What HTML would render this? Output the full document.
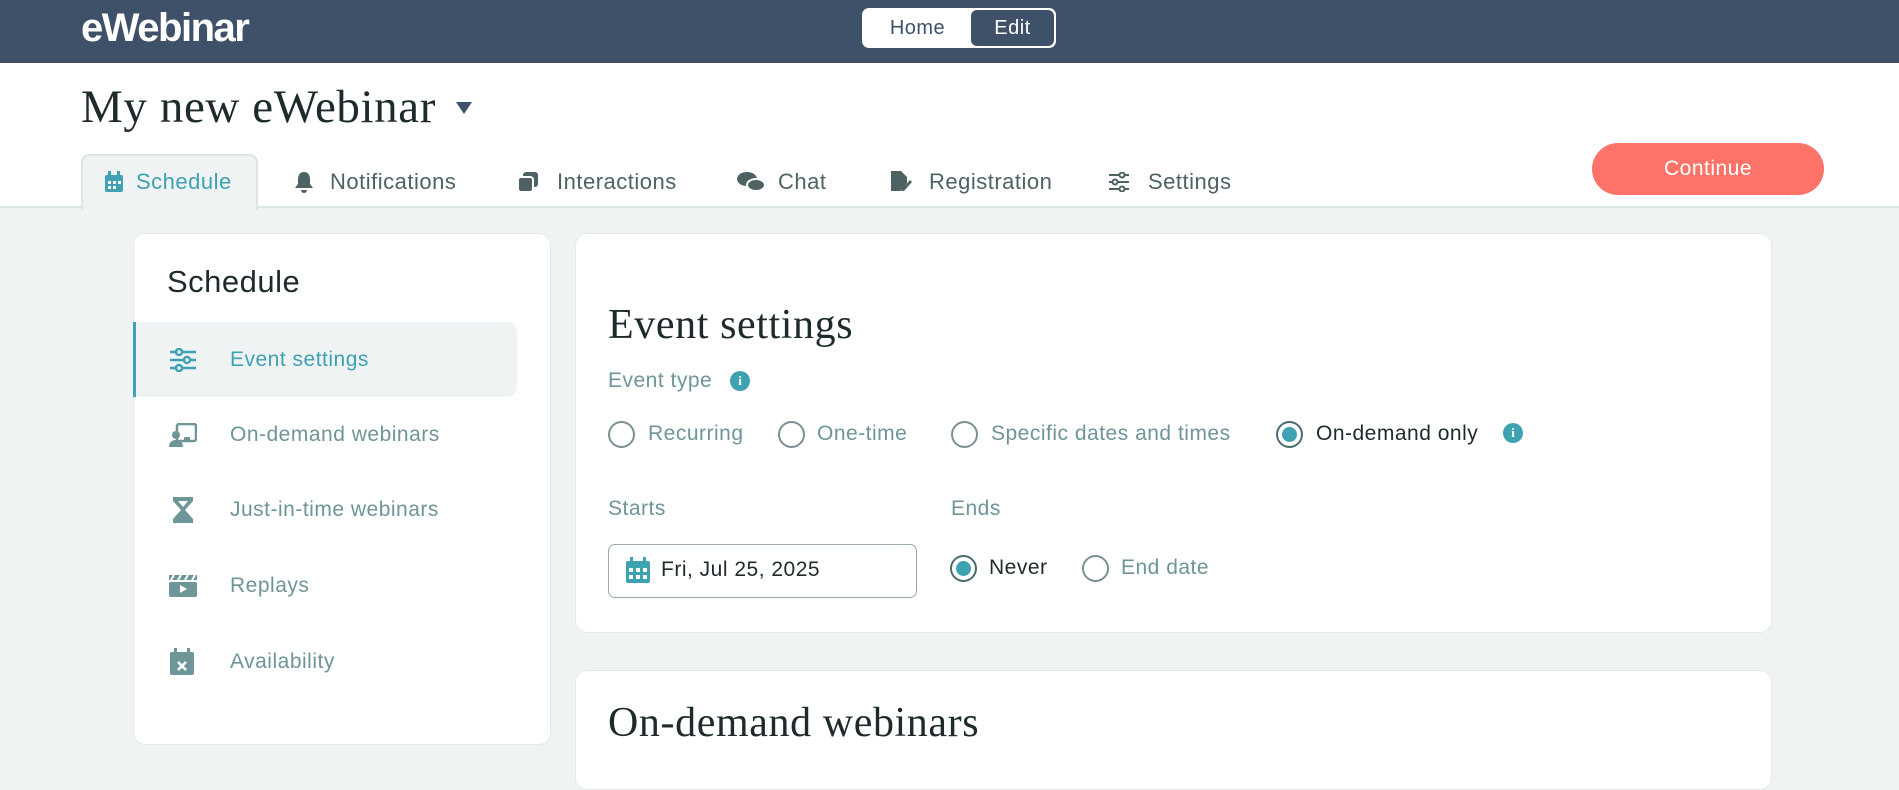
<!DOCTYPE html>
<html><head><meta charset="utf-8"><style>
*{box-sizing:border-box;margin:0;padding:0}
body{width:1899px;height:763px;overflow:hidden;background:#eff3f3;font-family:"Liberation Sans",sans-serif;position:relative;letter-spacing:0.5px}
.abs{position:absolute}
.hdr{left:0;top:0;width:1899px;height:63px;background:#3f5169}
.white{left:0;top:63px;width:1899px;height:145px;background:#fff;border-bottom:2px solid #dde5e7}
.tog{left:862px;top:8px;width:194px;height:40px;border:2px solid #fff;border-radius:7px;background:#fff;overflow:hidden}
.tog span{position:absolute;top:0;height:36px;line-height:36px;font-size:20px;text-align:center}
.tab{top:169px;font-size:22px;color:#4e6263;display:flex;align-items:center;gap:12px}
.card{background:#fff;border:1px solid #e4eaea;border-radius:12px}
.item{left:133px;width:384px;height:75px;display:flex;align-items:center;font-size:21px;color:#6e9597}
.item svg{position:absolute;left:36px}
.item span{position:absolute;left:97px}
.radio{width:27px;height:27px;border:2px solid #7d8f93;border-radius:50%;background:#fff}
.radio.on{border-color:#4a6c70}
.radio.on::after{content:"";position:absolute;left:4px;top:4px;width:15px;height:15px;border-radius:50%;background:#3fa2b3}
.lbl{font-size:21px;color:#6e9597}
.serif{font-family:"Liberation Serif",serif;color:#1f2a2d;letter-spacing:0.6px}
.info{width:20px;height:20px;border-radius:50%;background:#3fa2b3;color:#fff;font:bold 13px "Liberation Serif",serif;text-align:center;line-height:20px;letter-spacing:0}
</style></head><body>
<div class="abs hdr"></div>
<div class="abs" style="left:81px;top:6px;font-size:40px;font-weight:bold;color:#fff;letter-spacing:-1.5px">eWebinar</div>
<div class="abs tog"><span style="left:0;width:107px;color:#3f5169">Home</span><span style="left:107px;width:83px;background:#3f5169;color:#fff;border-radius:6px">Edit</span></div>
<div class="abs white"></div>
<div class="abs serif" style="left:81px;top:80px;font-size:47px">My new eWebinar</div>
<div class="abs" style="left:456px;top:102px;width:0;height:0;border-left:8px solid transparent;border-right:8px solid transparent;border-top:12px solid #3f5169"></div>
<div class="abs" style="left:81px;top:154px;width:177px;height:56px;background:#eff3f3;border:2px solid #dde5e7;border-bottom:none;border-radius:8px 8px 0 0"></div>
<div class="abs tab" style="left:104px;color:#3fa2b3"><svg width="20" height="22" viewBox="0 0 20 22"><rect x="1" y="4" width="18" height="17" rx="2" fill="#3fa2b3"/><rect x="4" y="0" width="3" height="5" fill="#3fa2b3"/><rect x="13" y="0" width="3" height="5" fill="#3fa2b3"/><g fill="#fff"><rect x="4" y="10" width="3" height="3"/><rect x="9" y="10" width="3" height="3"/><rect x="14" y="10" width="3" height="3"/><rect x="4" y="15" width="3" height="3"/><rect x="9" y="15" width="3" height="3"/></g></svg>Schedule</div>
<div class="abs tab" style="left:294px"><svg width="20" height="22" viewBox="0 0 20 22"><path d="M10 1c-4 0-6 3-6 7v5l-3 4h18l-3-4V8c0-4-2-7-6-7zM7 19a3 3 0 006 0z" fill="#4e6263"/></svg><span style="margin-left:4px">Notifications</span></div>
<div class="abs tab" style="left:517px"><svg width="22" height="22" viewBox="0 0 22 22"><rect x="6" y="1" width="15" height="15" rx="3" fill="#4e6263"/><rect x="1" y="6" width="15" height="15" rx="3" fill="#4e6263" stroke="#fff" stroke-width="2"/></svg><span style="margin-left:6px">Interactions</span></div>
<div class="abs tab" style="left:736px"><svg width="30" height="22" viewBox="0 0 30 22"><ellipse cx="11" cy="8" rx="10" ry="7" fill="#4e6263"/><ellipse cx="20" cy="14" rx="9" ry="6" fill="#4e6263" stroke="#fff" stroke-width="2"/></svg><span>Chat</span></div>
<div class="abs tab" style="left:889px"><svg width="24" height="24" viewBox="0 0 24 24"><path d="M2 1h10l6 6v6l-6 8H2z" fill="#4e6263"/><path d="M13 19l8-9 2 2-8 9h-2z" fill="#4e6263"/></svg><span style="margin-left:4px">Registration</span></div>
<div class="abs tab" style="left:1108px"><svg width="22" height="20" viewBox="0 0 22 20" fill="none" stroke="#4e6263" stroke-width="2"><path d="M1 3h20M1 10h20M1 17h20"/><circle cx="14" cy="3" r="2.5" fill="#fff"/><circle cx="7" cy="10" r="2.5" fill="#fff"/><circle cx="14" cy="17" r="2.5" fill="#fff"/></svg><span style="margin-left:6px">Settings</span></div>
<div class="abs" style="left:1592px;top:143px;width:232px;height:52px;border-radius:26px;background:#fd7369;color:#fff;font-size:21px;text-align:center;line-height:52px">Continue</div>

<div class="abs card" style="left:133px;top:233px;width:418px;height:512px"></div>
<div class="abs" style="left:167px;top:264px;font-size:31px;color:#1f2a2d">Schedule</div>
<div class="abs" style="left:133px;top:322px;width:384px;height:75px;background:#eff3f3;border-left:3px solid #3fa2b3;border-radius:0 10px 10px 0"></div>
<div class="abs item" style="top:322px;color:#3fa2b3"><svg width="28" height="24" viewBox="0 0 28 24" fill="none" stroke="#3fa2b3" stroke-width="2.5"><path d="M1 4h26M1 12h26M1 20h26"/><circle cx="10" cy="4" r="3" fill="#eff3f3"/><circle cx="18" cy="12" r="3" fill="#eff3f3"/><circle cx="10" cy="20" r="3" fill="#eff3f3"/></svg><span>Event settings</span></div>
<div class="abs item" style="top:397px"><svg width="28" height="24" viewBox="0 0 28 24"><rect x="8" y="1" width="19" height="17" rx="2" fill="none" stroke="#6e9597" stroke-width="2.5"/><circle cx="7" cy="12" r="4" fill="#6e9597"/><path d="M0 24c0-5 3-7 7-7s7 2 7 7z" fill="#6e9597"/><rect x="15" y="14" width="6" height="4" fill="#6e9597"/></svg><span>On-demand webinars</span></div>
<div class="abs item" style="top:472px"><svg width="28" height="28" viewBox="0 0 28 28"><path d="M4 1h20v4l-8 9 8 9v4H4v-4l8-9-8-9z" fill="#6e9597"/><path d="M9 5h10l-5 6z" fill="#fff"/></svg><span>Just-in-time webinars</span></div>
<div class="abs item" style="top:548px"><svg width="28" height="24" viewBox="0 0 28 24"><rect x="0" y="8" width="28" height="15" rx="2" fill="#6e9597"/><path d="M0 1h28v5H0z" fill="#6e9597"/><path d="M5 1l-3 5M12 1l-3 5M19 1l-3 5M26 1l-3 5" stroke="#fff" stroke-width="2"/><path d="M11 11l7 4-7 4z" fill="#fff"/></svg><span>Replays</span></div>
<div class="abs item" style="top:624px"><svg width="26" height="28" viewBox="0 0 26 28"><rect x="1" y="4" width="24" height="23" rx="2" fill="#6e9597"/><rect x="5" y="0" width="3" height="6" fill="#6e9597"/><rect x="18" y="0" width="3" height="6" fill="#6e9597"/><path d="M9 14l8 8M17 14l-8 8" stroke="#fff" stroke-width="2.5"/></svg><span>Availability</span></div>

<div class="abs card" style="left:575px;top:233px;width:1197px;height:400px"></div>
<div class="abs card" style="left:575px;top:670px;width:1197px;height:120px"></div>
<div class="abs serif" style="left:608px;top:301px;font-size:42px">Event settings</div>
<div class="abs lbl" style="left:608px;top:369px">Event type</div>
<div class="abs info" style="left:730px;top:371px">i</div>
<div class="abs radio" style="left:608px;top:421px"></div><div class="abs lbl" style="left:648px;top:422px">Recurring</div>
<div class="abs radio" style="left:778px;top:421px"></div><div class="abs lbl" style="left:817px;top:422px">One-time</div>
<div class="abs radio" style="left:951px;top:421px"></div><div class="abs lbl" style="left:991px;top:422px">Specific dates and times</div>
<div class="abs radio on" style="left:1276px;top:421px"></div><div class="abs lbl" style="left:1316px;top:422px;color:#1f2a2d">On-demand only</div>
<div class="abs info" style="left:1503px;top:423px">i</div>
<div class="abs lbl" style="left:608px;top:497px">Starts</div>
<div class="abs lbl" style="left:951px;top:497px">Ends</div>
<div class="abs" style="left:608px;top:544px;width:309px;height:54px;border:1.5px solid #9aa9ab;border-radius:7px"></div>
<svg class="abs" style="left:626px;top:557px" width="24" height="26" viewBox="0 0 24 26"><rect x="0" y="4" width="24" height="22" rx="2" fill="#3fa2b3"/><rect x="4" y="0" width="3" height="6" fill="#3fa2b3"/><rect x="17" y="0" width="3" height="6" fill="#3fa2b3"/><g fill="#fff"><rect x="3" y="11" width="4" height="4"/><rect x="10" y="11" width="4" height="4"/><rect x="17" y="11" width="4" height="4"/><rect x="3" y="18" width="4" height="4"/><rect x="10" y="18" width="4" height="4"/><rect x="17" y="18" width="4" height="4"/></g></svg>
<div class="abs" style="left:661px;top:558px;font-size:21px;color:#1f2a2d">Fri, Jul 25, 2025</div>
<div class="abs radio on" style="left:950px;top:555px"></div><div class="abs lbl" style="left:989px;top:556px;color:#1f2a2d">Never</div>
<div class="abs radio" style="left:1082px;top:555px"></div><div class="abs lbl" style="left:1121px;top:556px">End date</div>
<div class="abs serif" style="left:608px;top:699px;font-size:42px">On-demand webinars</div>
</body></html>
